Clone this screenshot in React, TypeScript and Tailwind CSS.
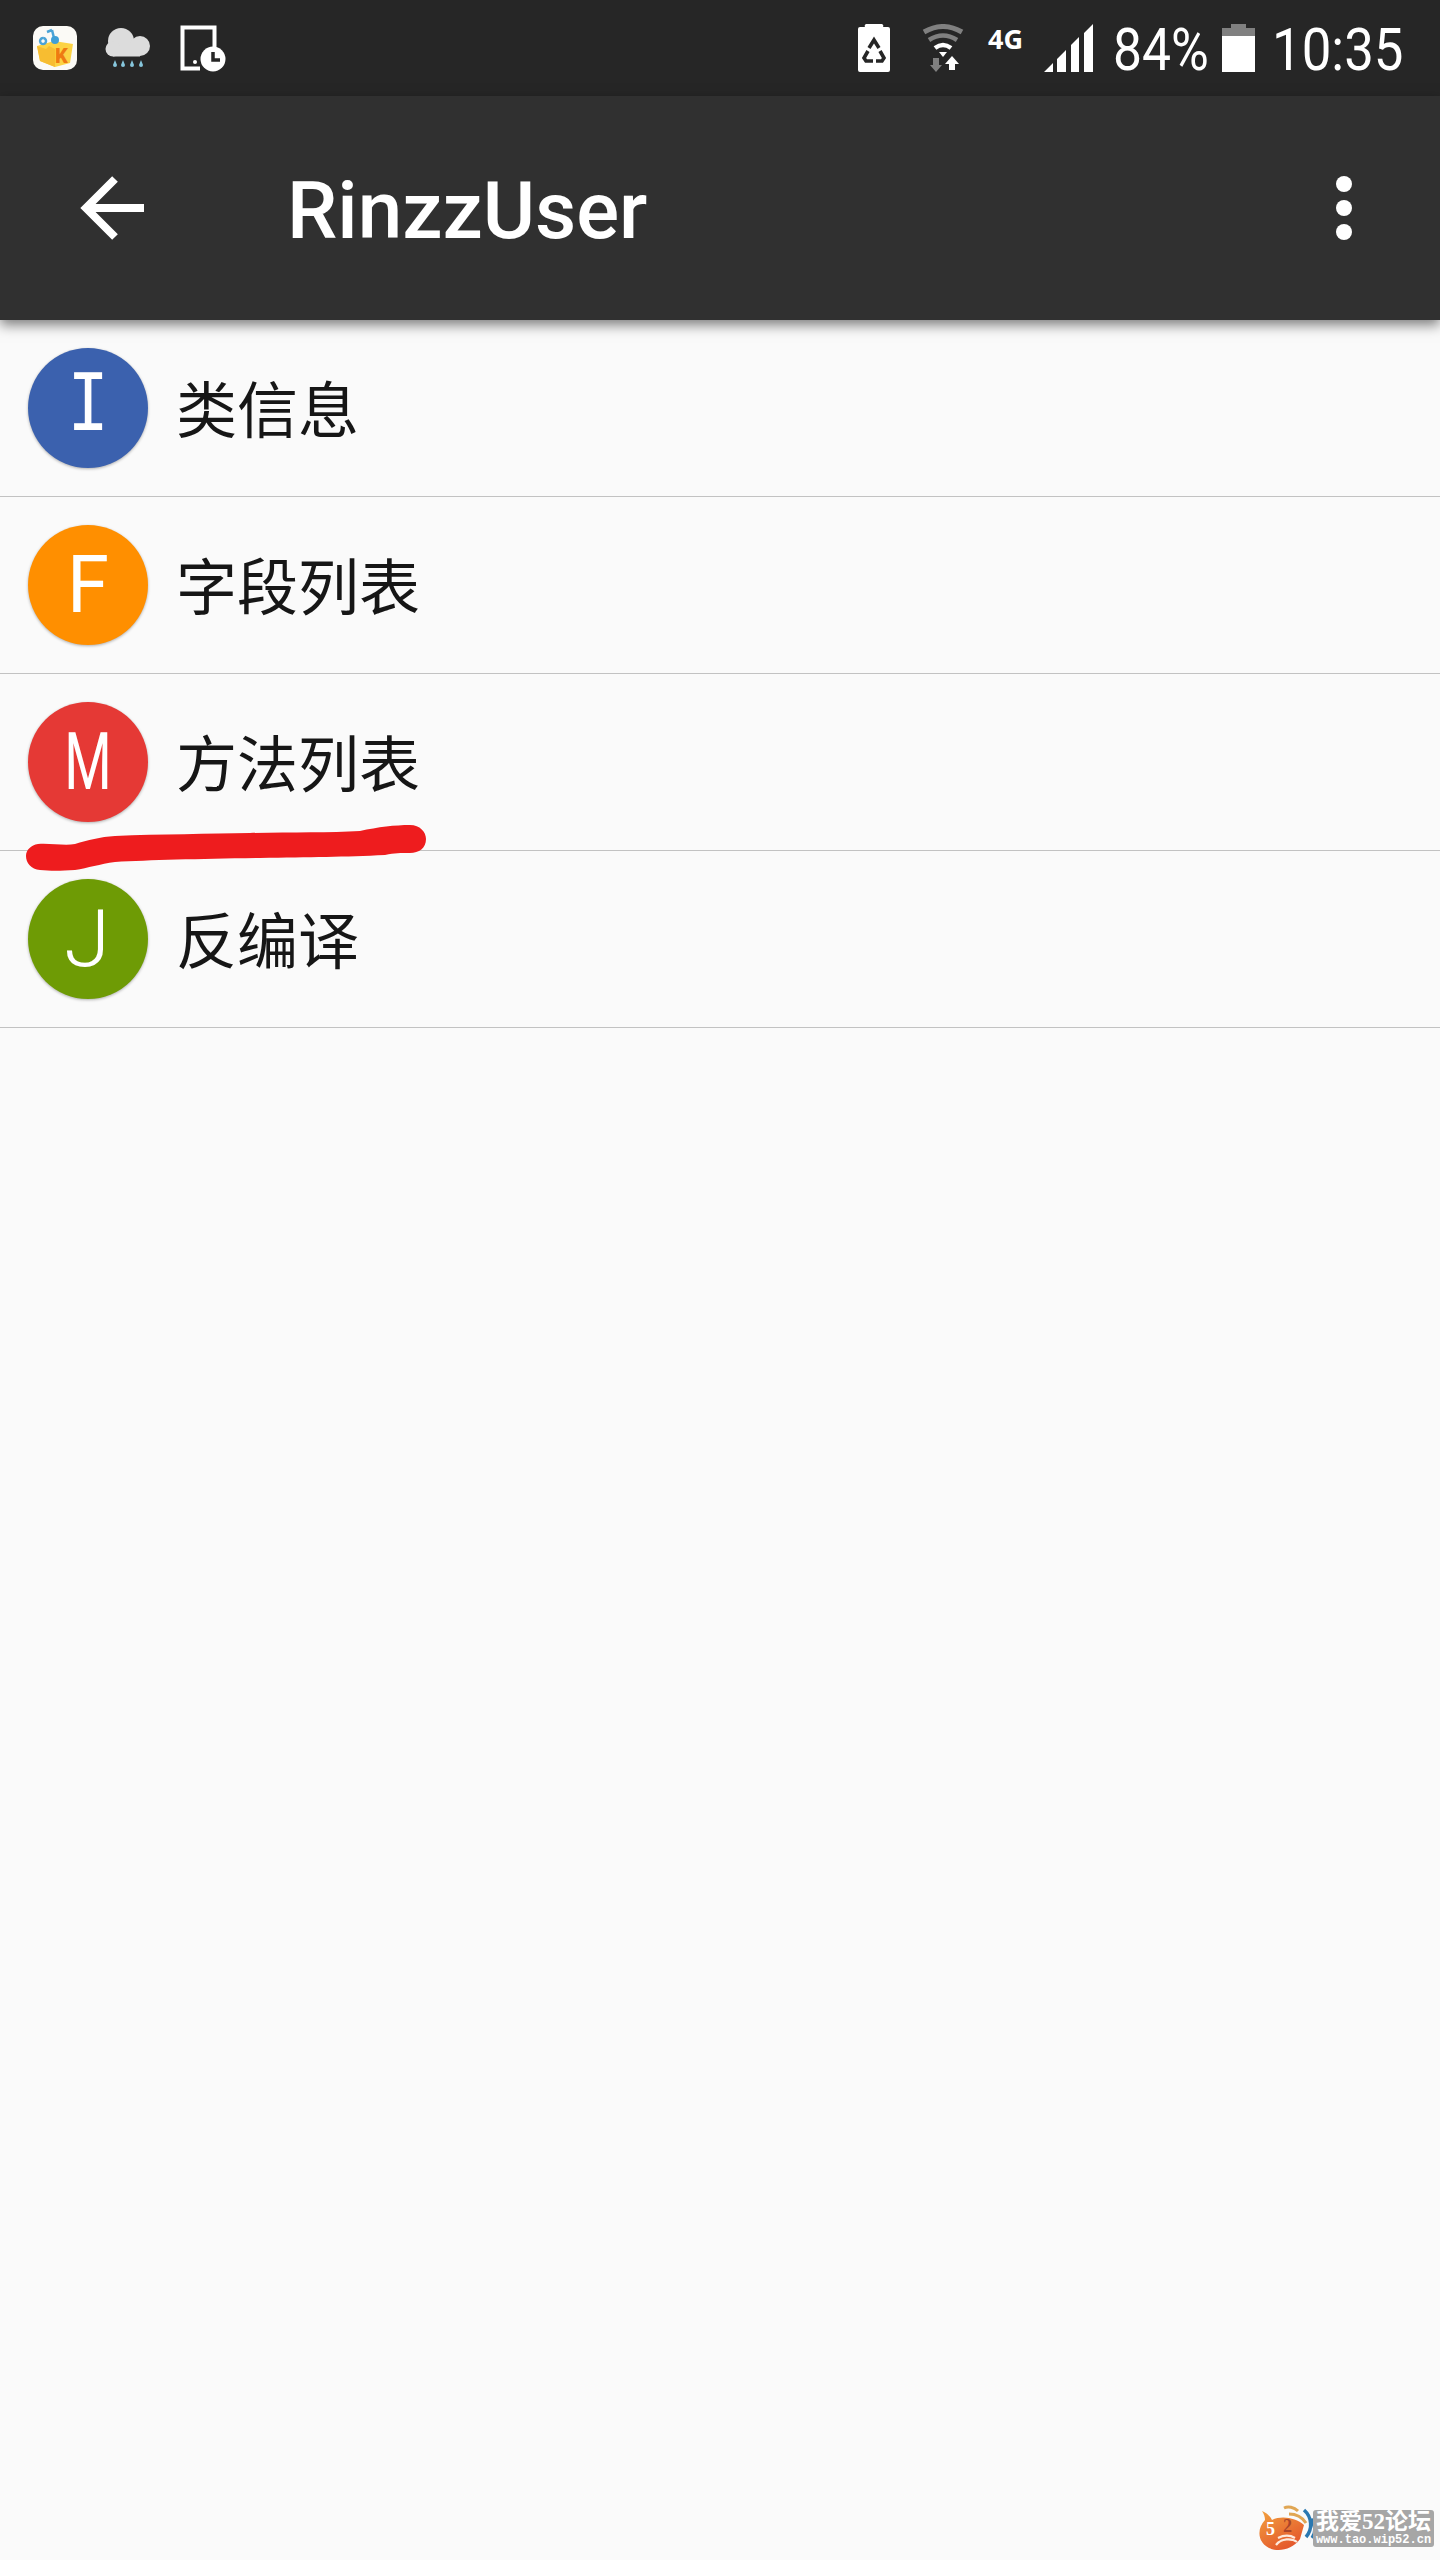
const rows = [
  { letter: "I", label: "类信息", bg: "bg-[#3b61ae]", letterClass: "font-['Liberation_Mono',monospace] text-[87px] scale-x-[0.8] -translate-y-px" },
  { letter: "F", label: "字段列表", bg: "bg-[#ff8f00]", letterClass: "text-[80px] font-normal scale-x-[0.95]" },
  { letter: "M", label: "方法列表", bg: "bg-[#e53935]", letterClass: "text-[80px] font-normal scale-x-[0.68]" },
  { letter: "J", label: "反编译", bg: "bg-[#6e9b05]", letterClass: "text-[80px] font-light scale-x-[1.05] -translate-x-px" },
];

function AppIcon() {
  return (
    <svg width="44" height="44" viewBox="0 0 44 44">
      <rect width="44" height="44" rx="10" fill="#fbfaf6" />
      <path d="M4 20l17-5 19 3-3 19-15 4-15-6z" fill="#fcd344" />
      <path d="M4 20l9 3 3-3 6 3v18l-15-6z" fill="#f7bd31" />
      <path d="M14 6l5-2M10 12a3 3 0 1 0 .1 0M19 4l2 8" stroke="#4aa3d6" strokeWidth="2.5" fill="none" />
      <circle cx="22" cy="14" r="4" fill="#3f9fd6" />
      <text x="22" y="37" fontFamily="Roboto, sans-serif" fontWeight="900" fontSize="20" fill="#ee7a12">K</text>
    </svg>
  );
}

function CloudIcon() {
  return (
    <svg width="46" height="44" viewBox="0 0 46 44">
      <circle cx="17" cy="15" r="13" fill="#dcdcdc" />
      <circle cx="36" cy="20" r="10" fill="#dcdcdc" />
      <circle cx="9" cy="23" r="7.5" fill="#dcdcdc" />
      <rect x="9" y="20" width="27" height="10.5" fill="#dcdcdc" />
      {[11, 19, 28, 37].map((x) => (
        <path key={x} d={`M${x} 34l2 5a2 2 0 1 1-4 0z`} fill="#86c6dc" />
      ))}
    </svg>
  );
}

function TabletClockIcon() {
  return (
    <svg width="46" height="48" viewBox="0 0 46 48">
      <path d="M34.5 24V3.5H2.5V44.5H20" stroke="#fff" strokeWidth="4" fill="none" />
      <circle cx="15" cy="38" r="2" fill="#fff" />
      <circle cx="33" cy="35" r="12.5" fill="#fff" />
      <path d="M33 28v8h7" stroke="#262626" strokeWidth="3.5" fill="none" />
    </svg>
  );
}

function RecycleBatteryIcon() {
  return (
    <svg width="32" height="48" viewBox="0 0 32 48">
      <path d="M9 0h14a2 2 0 0 1 2 3h5a2 2 0 0 1 2 2v41a2 2 0 0 1-2 2H2a2 2 0 0 1-2-2V5a2 2 0 0 1 2-2h5a2 2 0 0 1 2-3z" fill="#fff" />
      <path d="M11 24l5-8 5 8M10 27l-4 7 2 3h7M22 27l4 7-2 3h-6" stroke="#262626" strokeWidth="3.6" fill="none" />
    </svg>
  );
}

function WifiIcon() {
  return (
    <svg width="42" height="49" viewBox="0 0 42 49">
      <path d="M2 8Q21-3 40 8" stroke="#808080" strokeWidth="5" fill="none" />
      <path d="M7 16Q21 7 35 16" stroke="#808080" strokeWidth="4.5" fill="none" />
      <path d="M13 24Q21 18 29 24" stroke="#fff" strokeWidth="4.5" fill="none" />
      <path d="M17 28h8l-4 5z" fill="#fff" />
      <path d="M11 34h6v7h3l-6 7-6-7h3z" fill="#808080" />
      <path d="M30 32l7 8h-4v6h-6v-6h-4z" fill="#fff" />
    </svg>
  );
}

function SignalIcon() {
  return (
    <svg width="49" height="48" viewBox="0 0 49 48">
      <path d="M0 48h9v-9zM13 48h9V26l-9 9zM27 48h8V13l-8 8zM40 48h9V0l-9 9z" fill="#fff" />
    </svg>
  );
}

function BatteryIcon() {
  return (
    <svg width="33" height="48" viewBox="0 0 33 48">
      <path d="M9 0h15v4h9v8H0V4h9z" fill="#808080" />
      <rect y="12" width="33" height="36" fill="#fff" />
    </svg>
  );
}

function ArrowIcon() {
  return (
    <svg width="64" height="64" viewBox="0 0 64 64">
      <path d="M64 32H6M35 3L6 32l29 29" stroke="#fff" strokeWidth="8" fill="none" />
    </svg>
  );
}

function ForumLogo() {
  return (
    <svg width="62" height="47" viewBox="0 0 62 47">
      <defs>
        <linearGradient id="flame" x1="0" y1="0" x2="0.6" y2="1">
          <stop offset="0" stopColor="#f2a13e" />
          <stop offset="1" stopColor="#e4572c" />
        </linearGradient>
      </defs>
      <path d="M6 6C12 9 14 11 16 15C26 10 40 13 48 20L44 34C38 43 24 48 13 43C1 37 1 23 9 15C9 12 8 9 6 6Z" fill="url(#flame)" />
      <path d="M28 3C32 1 38 2 42 6M33 9C40 9 46 12 50 18" stroke="#e0a654" strokeWidth="3" fill="none" />
      <path d="M48 5C56 12 57 24 50 32M55 14C60 20 60 28 56 33" stroke="#2b78b0" strokeWidth="3.5" fill="none" />
      <path d="M20 40c5-7 16-7 21-3M22 33c6-3 12-3 17 0" stroke="#fde9dc" strokeWidth="2.2" fill="none" />
      <text x="10" y="30" fontFamily="Liberation Serif, serif" fontWeight="700" fontSize="18" fill="#fff">5</text>
      <text x="27" y="27" fontFamily="Liberation Serif, serif" fontWeight="700" fontSize="18" fill="#a9452b">2</text>
    </svg>
  );
}

export default function App() {
  return (
    <div className="relative h-[2560px] bg-[#fafafa] overflow-hidden font-['Roboto','Noto_Sans_CJK_SC',sans-serif]">
      {/* status bar */}
      <div className="h-[96px] bg-[#262626] flex items-center justify-between pl-[33px] pr-[36px]">
        <div className="flex items-center">
          <AppIcon />
          <div className="ml-[27px]"><CloudIcon /></div>
          <div className="ml-[30px]"><TabletClockIcon /></div>
        </div>
        <div className="flex items-center text-white">
          <RecycleBatteryIcon />
          <div className="ml-[32px]"><WifiIcon /></div>
          <div className="ml-[24px] w-[38px] h-[48px] text-[27px] leading-[30px] font-bold font-['Open_Sans',sans-serif]">4G</div>
          <div className="ml-[18px]"><SignalIcon /></div>
          <div className="ml-[20px] w-[96px] h-[60px] pt-[2px]">
            <span className="inline-block origin-left scale-x-[0.86] text-[60px] leading-[60px] whitespace-nowrap">84%</span>
          </div>
          <div className="ml-[13px]"><BatteryIcon /></div>
          <div className="ml-[17px] w-[132px] h-[60px] pt-[2px]">
            <span className="inline-block origin-left scale-x-[0.88] text-[60px] leading-[60px] whitespace-nowrap">10:35</span>
          </div>
        </div>
      </div>

      {/* toolbar */}
      <div className="relative z-10 h-[224px] bg-[#303030] flex items-center pl-[80px] pr-[88px] shadow-[0_5px_12px_rgba(0,0,0,0.5)]">
        <ArrowIcon />
        <div className="ml-[143px] pt-[6px] text-white text-[80px] font-medium leading-none">RinzzUser</div>
        <div className="ml-auto flex flex-col gap-2">
          <span className="w-4 h-4 rounded-full bg-white" />
          <span className="w-4 h-4 rounded-full bg-white" />
          <span className="w-4 h-4 rounded-full bg-white" />
        </div>
      </div>

      {/* list */}
      <div>
        {rows.map((row) => (
          <div key={row.letter} className="h-[177px] flex items-center pl-[28px] border-b border-[#c2c2c2]">
            <div className={`w-[120px] h-[120px] rounded-full flex items-center justify-center text-white shadow-[0_1px_3px_rgba(0,0,0,0.3)] ${row.bg}`}>
              <span className={`inline-block leading-none ${row.letterClass}`}>{row.letter}</span>
            </div>
            <div className="ml-[28px] pb-[3px] text-[61px] leading-none text-[#161616] font-['Noto_Sans_CJK_SC',sans-serif]">{row.label}</div>
          </div>
        ))}
      </div>

      {/* red marker stroke drawn over the list */}
      <svg className="absolute left-0 top-[820px]" width="440" height="60" viewBox="0 0 440 60">
        <path
          d="M38 24C50 23 65 26 75 24C88 20 100 17 115 16C160 14 210 14 250 13C290 12 330 13 360 11C378 7 395 5 410 5C420 5 426 12 426 19C426 28 419 33 410 33C400 33 395 33 385 35C345 37 310 37 260 38C200 39 150 40 115 42C100 44 88 48 75 50C60 51 50 51 40 50C31 49 26 43 26 36C26 30 31 25 38 24Z"
          fill="#ee1c1e"
        />
      </svg>

      {/* forum watermark */}
      <div className="absolute right-[6px] bottom-[8px] flex items-center">
        <ForumLogo />
        <div className="-ml-[5px] w-[121px] h-[37px] bg-[#a6a6a6] rounded-[3px] flex flex-col items-center text-white font-bold leading-none overflow-hidden">
          <span className="text-[23px] leading-[23px] whitespace-nowrap font-['Liberation_Serif','Noto_Sans_CJK_SC',serif]">我爱52论坛</span>
          <span className="text-[12px] leading-[14px] whitespace-nowrap font-['Liberation_Mono',monospace]">www.tao.wip52.cn</span>
        </div>
      </div>
    </div>
  );
}
